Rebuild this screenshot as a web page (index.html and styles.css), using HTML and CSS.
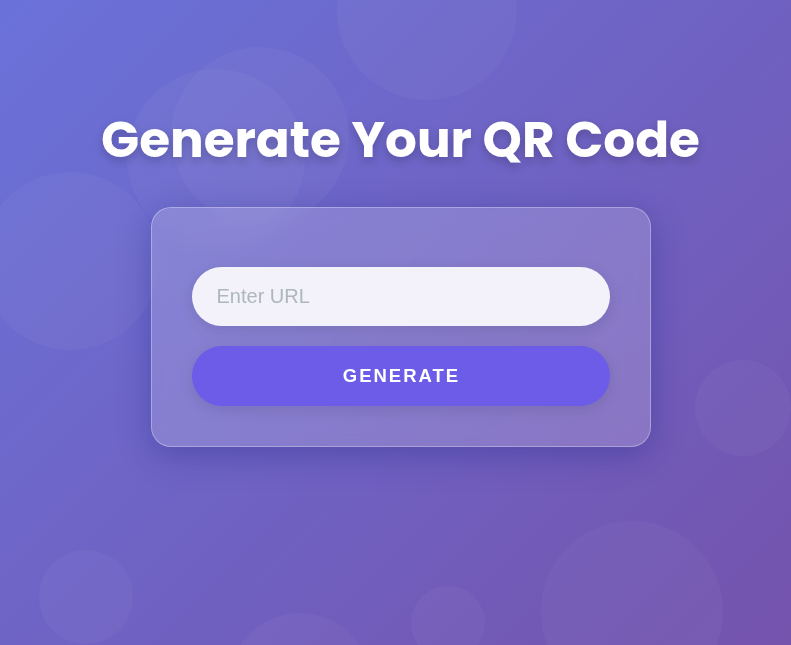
FILE: index.html
```html
<!DOCTYPE html>
<html lang="en">
<head>
<meta charset="utf-8">
<title>QR Code Generator</title>
<link rel="stylesheet" href="styles.css">
</head>
<body>
<div class="bubbles" aria-hidden="true">
  <span class="bubble b1"></span>
  <span class="bubble b2"></span>
  <span class="bubble b3"></span>
  <span class="bubble b4"></span>
  <span class="bubble b5"></span>
  <span class="bubble b6"></span>
  <span class="bubble b7"></span>
  <span class="bubble b8"></span>
  <span class="bubble b9"></span>
</div>
<main class="page">
  <h1 class="title">Generate Your QR Code</h1>
  <section class="card">
    <input class="url-input" type="text" placeholder="Enter URL">
    <button class="generate-btn" type="button">GENERATE</button>
  </section>
</main>
</body>
</html>
```
FILE: styles.css
```css
* { box-sizing: border-box; }

html, body {
  margin: 0;
  height: 100%;
}

body {
  background: linear-gradient(135deg, #6a72d9 0%, #7453ad 100%);
  font-family: "Liberation Sans", Arial, sans-serif;
  overflow: hidden;
  position: relative;
}

.bubbles {
  position: absolute;
  inset: 0;
  overflow: hidden;
  z-index: 0;
}

.bubble {
  position: absolute;
  border-radius: 50%;
  background: rgba(255, 255, 255, 0.035);
}

.b1 { left: 127px; top: 69px; width: 178px; height: 178px; }
.b2 { left: 171px; top: 47px; width: 178px; height: 178px; }
.b3 { left: -19px; top: 172px; width: 178px; height: 178px; }
.b4 { left: 337px; top: -80px; width: 180px; height: 180px; }
.b5 { left: 695px; top: 360px; width: 96px; height: 96px; }
.b6 { left: 39px; top: 550px; width: 94px; height: 94px; }
.b7 { left: 228px; top: 613px; width: 144px; height: 144px; }
.b8 { left: 411px; top: 586px; width: 74px; height: 74px; }
.b9 { left: 541px; top: 521px; width: 182px; height: 182px; }

.page {
  position: relative;
  z-index: 1;
  display: flex;
  flex-direction: column;
  align-items: center;
  padding: 110px 0 0 10px;
}

.title {
  margin: 0 0 37px;
  font-family: "Poppins", Inter, "Noto Sans", sans-serif;
  font-weight: 700;
  font-size: 50px;
  line-height: 60px;
  color: #ffffff;
  letter-spacing: 0;
  text-shadow: 0 4px 10px rgba(0, 0, 0, 0.2);
}

.card {
  width: 500px;
  height: 240px;
  padding: 59px 40px 40px;
  display: flex;
  flex-direction: column;
  gap: 20px;
  background: rgba(255, 255, 255, 0.17);
  border: 1px solid rgba(255, 255, 255, 0.3);
  border-radius: 20px;
  box-shadow: 0 8px 32px 0 rgba(31, 38, 135, 0.37);
  backdrop-filter: blur(10px);
}

.url-input {
  height: 60px;
  width: 100%;
  border: none;
  outline: none;
  border-radius: 30px;
  padding: 0 25px;
  font-family: "Liberation Sans", Arial, sans-serif;
  font-size: 20px;
  color: #333;
  background: rgba(255, 255, 255, 0.9);
  box-shadow: 0 4px 15px rgba(0, 0, 0, 0.1);
}

.url-input::placeholder {
  color: #aeb7be;
}

.generate-btn {
  height: 60px;
  width: 100%;
  border: none;
  border-radius: 30px;
  background: #6c5ce7;
  color: #ffffff;
  font-family: "Liberation Sans", Arial, sans-serif;
  font-weight: 700;
  font-size: 18.5px;
  letter-spacing: 2px;
  text-indent: 2px;
  box-shadow: 0 4px 15px rgba(0, 0, 0, 0.1);
  cursor: pointer;
}
```
